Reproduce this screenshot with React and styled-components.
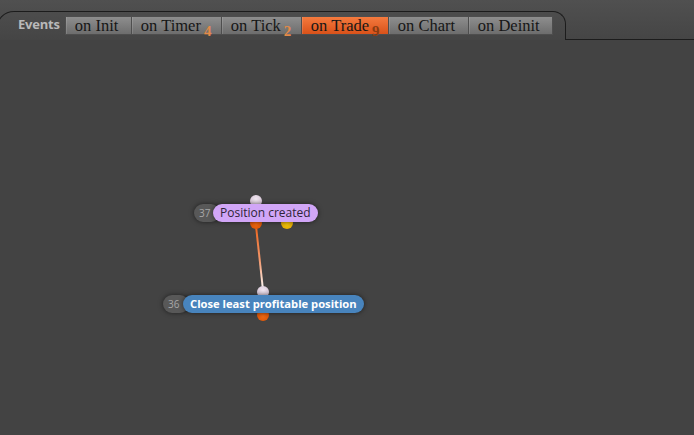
import React from 'react';
import styled, { createGlobalStyle } from 'styled-components';

const GlobalStyle = createGlobalStyle`
  html, body {
    margin: 0;
    padding: 0;
    background: #434343;
    height: 100%;
    overflow: hidden;
  }
  #root {
    height: 100%;
  }
`;

const Page = styled.div`
  width: 694px;
  height: 435px;
  display: flex;
  flex-direction: column;
  background: #434343;
`;

const Header = styled.div`
  height: 40px;
  display: flex;
  align-items: flex-end;
  background: linear-gradient(#505050, #454545);
  flex-shrink: 0;
`;

const Panel = styled.div`
  margin-left: -4px;
  height: 29px;
  width: 570px;
  box-sizing: border-box;
  border: 1.5px solid #1c1c1c;
  border-bottom: none;
  border-radius: 18px 13px 0 0;
  display: flex;
  align-items: flex-start;
  padding: 4px 0 0 21px;
`;

const Filler = styled.div`
  flex: 1;
  height: 1px;
  border-bottom: 1.5px solid #1c1c1c;
`;

const Title = styled.div`
  font-family: 'Open Sans', 'DejaVu Sans', sans-serif;
  font-weight: bold;
  font-size: 13px;
  color: #b9b9b9;
  line-height: 20px;
  margin-right: 5px;
  margin-top: -2px;
  letter-spacing: -0.2px;
`;

const Tabs = styled.div`
  display: flex;
`;

const Tab = styled.div`
  width: ${(p) => p.$w}px;
  height: 19px;
  box-sizing: border-box;
  border: 1px solid #4e4e4e;
  border-left: ${(p) => (p.$first ? '1px solid #4e4e4e' : 'none')};
  background: ${(p) =>
    p.$active
      ? 'linear-gradient(#f47a3e, #d9521a)'
      : 'linear-gradient(#8e8e8e, #6d6d6d)'};
  font-family: 'Liberation Serif', 'DejaVu Serif', serif;
  font-size: 16.5px;
  line-height: 17px;
  color: #161616;
  padding-left: 9px;
  white-space: nowrap;
  box-shadow: inset 1px 0 0 rgba(255, 255, 255, 0.12);
`;

const Count = styled.span`
  font-family: 'Liberation Serif', 'DejaVu Serif', serif;
  font-weight: bold;
  font-size: 15px;
  color: ${(p) => (p.$active ? '#8a3c12' : '#e58a48')};
  position: relative;
  top: 5px;
  margin-left: 3px;
`;

const Canvas = styled.div`
  position: relative;
  flex: 1;
`;

const Wires = styled.svg`
  position: absolute;
  left: 0;
  top: 0;
  width: 694px;
  height: 395px;
`;

const Port = styled.div`
  position: absolute;
  left: ${(p) => p.$x - 6}px;
  top: ${(p) => p.$y - 46}px;
  width: 12px;
  height: 12px;
  border-radius: 50%;
  background: ${(p) =>
    p.$kind === 'in'
      ? 'radial-gradient(circle at 50% 35%, #f2e8f2, #c8b4c8)'
      : p.$kind === 'alt'
      ? 'radial-gradient(circle at 50% 60%, #f2c40c, #d99a00)'
      : 'radial-gradient(circle at 50% 60%, #f06a14, #cf4a00)'};
`;

const Node = styled.div`
  position: absolute;
  left: ${(p) => p.$x}px;
  top: ${(p) => p.$y - 40}px;
  display: flex;
  height: 18px;
  font-family: 'Open Sans', 'DejaVu Sans', sans-serif;
  line-height: 18px;
`;

const Counter = styled.div`
  width: 26px;
  height: 18px;
  border-radius: 9px;
  background: #585858;
  color: #a8a8a8;
  font-size: 10px;
  padding-left: 5px;
  box-sizing: border-box;
  box-shadow: 0 0 5px rgba(0, 0, 0, 0.55);
`;

const Label = styled.div`
  margin-left: ${(p) => p.$overlap}px;
  height: 18px;
  border-radius: 9px;
  padding: 0 ${(p) => p.$pad}px;
  background: ${(p) => p.$bg};
  color: ${(p) => p.$fg};
  font-size: ${(p) => p.$size}px;
  font-weight: ${(p) => (p.$bold ? 'bold' : 'normal')};
  white-space: nowrap;
  box-shadow: 0 0 5px rgba(0, 0, 0, 0.55);
`;

const tabs = [
  { name: 'on Init', w: 67 },
  { name: 'on Timer', w: 90, n: 4 },
  { name: 'on Tick', w: 80, n: 2 },
  { name: 'on Trade', w: 87, n: 9, active: true },
  { name: 'on Chart', w: 80 },
  { name: 'on Deinit', w: 84 },
];

export default function App() {
  return (
    <Page>
      <GlobalStyle />
      <Header>
        <Panel>
          <Title>Events</Title>
          <Tabs>
            {tabs.map((t, i) => (
              <Tab key={t.name} $w={t.w} $first={i === 0} $active={t.active}>
                {t.name}
                {t.n && <Count $active={t.active}>{t.n}</Count>}
              </Tab>
            ))}
          </Tabs>
        </Panel>
        <Filler />
      </Header>
      <Canvas>
        <Wires viewBox="0 40 694 395">
          <defs>
            <linearGradient id="wire" x1="0" y1="0" x2="0" y2="1">
              <stop offset="0" stopColor="#f0641a" />
              <stop offset="0.55" stopColor="#f29a70" />
              <stop offset="1" stopColor="#ffffff" />
            </linearGradient>
          </defs>
          <path d="M256 226 L263 290" stroke="url(#wire)" strokeWidth="2" fill="none" />
        </Wires>

        <Port $x={256} $y={201} $kind="in" />
        <Port $x={256} $y={223} $kind="out" />
        <Port $x={287} $y={223} $kind="alt" />
        <Port $x={263} $y={292} $kind="in" />
        <Port $x={263} $y={315} $kind="out" />

        <Node $x={194} $y={204}>
          <Counter>37</Counter>
          <Label $overlap={-7} $pad={7} $size={12} $bg="#d1a6f7" $fg="#2e2538">
            Position created
          </Label>
        </Node>
        <Node $x={163} $y={295}>
          <Counter>36</Counter>
          <Label $overlap={-6} $pad={7} $size={11.2} $bg="#4884bd" $fg="#ffffff" $bold>
            Close least profitable position
          </Label>
        </Node>
      </Canvas>
    </Page>
  );
}
